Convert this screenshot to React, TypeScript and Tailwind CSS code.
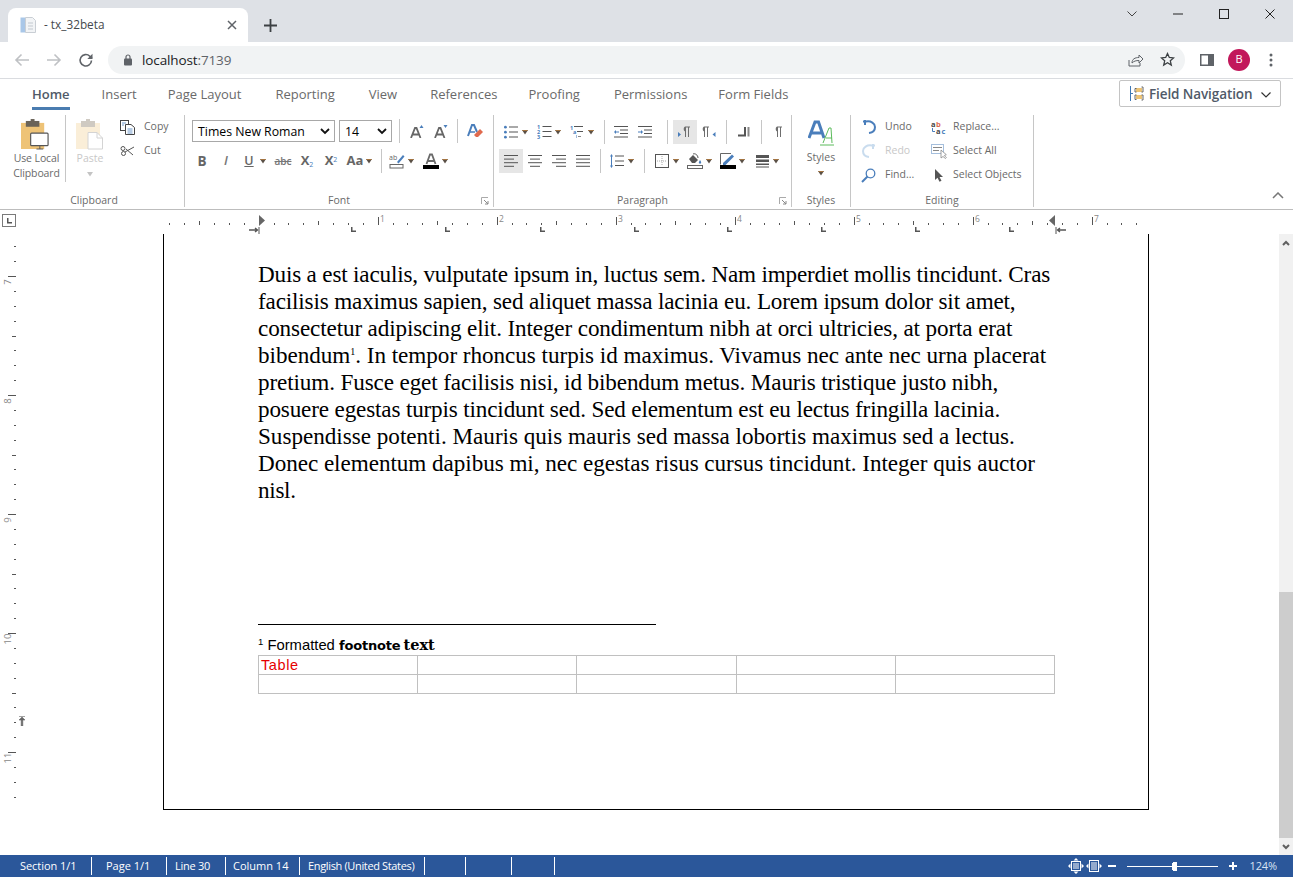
import React from "react";

const UI = "font-['Open_Sans',sans-serif]";

/* ---------- small drawings ---------- */
const Arrow = () => (
  <svg width="8" height="6" viewBox="0 0 8 6" className="shrink-0">
    <path d="M1 1h6L4 5.500z" fill="#5a5046" />
    <path d="M1 1h6l-.8 1H1.800z" fill="#a5743f" />
  </svg>
);

const Box = ({ children, active }: { children: React.ReactNode; active?: boolean }) => (
  <div className={`w-6 h-6 shrink-0 flex items-center justify-center ${active ? "bg-[#e6e6e6]" : ""}`}>{children}</div>
);

const Drop = ({ children }: { children: React.ReactNode }) => (
  <div className="flex items-center shrink-0 h-6">
    <Box>{children}</Box>
    <div className="w-2 -ml-[2px] flex justify-center">
      <Arrow />
    </div>
  </div>
);

const VSep = () => <div className="w-px h-6 bg-[#c6c6c6] shrink-0" />;

const Lines = ({ rows }: { rows: [number, number][] }) => (
  <svg width="16" height="14" viewBox="0 0 16 14">
    {rows.map(([x, w], i) => (
      <rect key={i} x={x} y={1 + i * 3.600} width={w} height="1" fill="#555" />
    ))}
  </svg>
);

const Launcher = () => (
  <svg width="8" height="8" viewBox="0 0 8 8" className="shrink-0">
    <path d="M.5 7V.5H7" fill="none" stroke="#aaa" />
    <path d="M3 3l4 4M7 4v3H4" fill="none" stroke="#888" />
  </svg>
);

const Bullets = () => (
  <svg width="14" height="14" viewBox="0 0 14 14">
    {[1, 6, 11].map((y) => (
      <g key={y}>
        <circle cx="1.400" cy={y + 1.200} r="1.400" fill="#4a7ebb" />
        <rect x="5" y={y + 0.500} width="9" height="1" fill="#555" />
      </g>
    ))}
  </svg>
);

const Numbered = () => (
  <svg width="15" height="14" viewBox="0 0 15 14">
    {[1, 6, 11].map((y, i) => (
      <g key={y}>
        <text x="0" y={y + 2.500} fontSize="5.500" fontWeight="700" fill="#4a7ebb" fontFamily="Open Sans">{i + 1}</text>
        <rect x="5.500" y={y} width="9" height="1" fill="#555" />
      </g>
    ))}
  </svg>
);

const Multi = () => (
  <svg width="14" height="14" viewBox="0 0 14 14">
    <text x="0" y="4.500" fontSize="5.500" fontWeight="700" fill="#4a7ebb" fontFamily="Open Sans">1</text>
    <rect x="4" y="1" width="9" height="1" fill="#555" />
    <text x="3" y="9" fontSize="5.500" fontWeight="700" fill="#4a7ebb" fontFamily="Open Sans">a</text>
    <rect x="7" y="6" width="6" height="1" fill="#555" />
    <rect x="6" y="10" width="1" height="3" fill="#a0b8d8" />
    <rect x="8" y="11" width="3" height="1" fill="#888" />
  </svg>
);

const Indent = ({ right }: { right?: boolean }) => (
  <svg width="14" height="12" viewBox="0 0 14 12">
    <rect x="0" y="0" width="14" height="1" fill="#555" />
    <rect x="6" y="3.500" width="8" height="1" fill="#555" />
    <rect x="6" y="7" width="8" height="1" fill="#555" />
    <rect x="0" y="10.500" width="14" height="1" fill="#555" />
    {right ? (
      <path d="M0 5.500h3V4l2 2-2 2V6.500H0z" fill="#4a7ebb" />
    ) : (
      <path d="M5 5.500H2V4L0 6l2 2V6.500h3z" fill="#4a7ebb" />
    )}
  </svg>
);

const Pilcrow = ({ arrow }: { arrow?: "l" | "r" }) => (
  <svg width="14" height="12" viewBox="0 0 14 12">
    {arrow === "l" && <path d="M0 6l3 2.500L0 11z" fill="#4a7ebb" />}
    <path
      d={arrow === "l" ? "M7 11V5.500a3 3 0 0 1 0-5h5v1h-1V11h-1V1.500H8V11z" : arrow === "r" ? "M2 11V5.500a3 3 0 0 1 0-5h5v1H6V11H5V1.500H3V11z" : "M5 11V5.500a3 3 0 0 1 0-5h5v1H9V11H8V1.500H6V11z"}
      fill="#6e6e6e"
    />
    {arrow === "r" && <path d="M13.500 6l-3 2.500 3 2.500z" fill="#4a7ebb" />}
  </svg>
);

/* ---------- ruler data ---------- */
const STEP = 14.875;
const ZERO = 259.7;
const hTicks: { x: number; h: number }[] = [];
for (let i = -6; i <= 59; i++) {
  const x = ZERO + i * STEP;
  if (i === 0 || x > 1140 || Math.abs(x - 1052) < 3) continue;
  if (i % 8 === 0) hTicks.push({ x, h: 9 });
  else if (i % 4 === 0) hTicks.push({ x, h: 5 });
  else hTicks.push({ x, h: 2 });
}
const hNums = [1, 2, 3, 4, 5, 6, 7];
const tabStops = [352, 446, 541, 635, 728, 822, 916, 1010];

const V0 = 276;
const vTicks: { y: number; w: number }[] = [];
for (let i = -2; i <= 42; i++) {
  const y = V0 + i * STEP;
  if (y > 800 || y < 240) continue;
  if (i % 8 === 0) vTicks.push({ y, w: 9 });
  else if (i % 4 === 0) vTicks.push({ y, w: 5 });
  else vTicks.push({ y, w: 2 });
}
const vNums = [7, 8, 9, 10, 11];

const body: [string | null, string][] = [
  ["Duis a est iaculis, vulputate ipsum in, luctus sem. Nam imperdiet mollis tincidunt. Cras", "tracking-[-0.18px]"],
  ["facilisis maximus sapien, sed aliquet massa lacinia eu. Lorem ipsum dolor sit amet,", "tracking-[-0.157px]"],
  ["consectetur adipiscing elit. Integer condimentum nibh at orci ultricies, at porta erat", "tracking-[-0.128px]"],
  [null, "tracking-[-0.034px]"],
  ["pretium. Fusce eget facilisis nisi, id bibendum metus. Mauris tristique justo nibh,", "tracking-[-0.12px]"],
  ["posuere egestas turpis tincidunt sed. Sed elementum est eu lectus fringilla lacinia.", "tracking-[-0.155px]"],
  ["Suspendisse potenti. Mauris quis mauris sed massa lobortis maximus sed a lectus.", "tracking-[-0.0125px]"],
  ["Donec elementum dapibus mi, nec egestas risus cursus tincidunt. Integer quis auctor", "tracking-[-0.048px]"],
  ["nisl.", "tracking-[-0.3px]"],
];

/* ---------- top-level pieces ---------- */
function TabStrip() {
  return (
    <div className="h-[42px] bg-[#dee1e6] flex items-end pl-2 relative">
      <div className="w-[240px] h-[34px] bg-white rounded-t-lg flex items-center pl-3 pr-[11px]">
        <svg width="16" height="16" viewBox="0 0 16 16" className="shrink-0">
          <rect x="0.500" y="0.500" width="5" height="15" fill="#a9c7e8" />
          <path d="M5.500 .5h7l3 3v12h-10z" fill="#f2f4f6" stroke="#c9ced4" />
          <path d="M8 6h5M8 9h5M8 12h5" stroke="#c2c8cf" />
        </svg>
        <span className={`ml-2 text-[11.800px] text-[#45494d] grow ${UI}`}>- tx_32beta</span>
        <svg width="10" height="10" viewBox="0 0 10 10">
          <path d="M1 1l8 8M9 1l-8 8" stroke="#5f6368" strokeWidth="1.500" />
        </svg>
      </div>
      <div className="w-[44px] h-[34px] flex items-center justify-center">
        <svg width="13" height="13" viewBox="0 0 13 13">
          <path d="M6.500 0v13M0 6.500h13" stroke="#3c4043" strokeWidth="1.800" />
        </svg>
      </div>
      <div className="ml-auto self-start flex h-[28px] items-center">
        <div className="w-[46px] flex justify-center">
          <svg width="10" height="6" viewBox="0 0 10 6"><path d="M.5.500L5 5 9.500.500" fill="none" stroke="#444" /></svg>
        </div>
        <div className="w-[46px] flex justify-center">
          <svg width="10" height="2" viewBox="0 0 10 2"><path d="M0 1h10" stroke="#222" /></svg>
        </div>
        <div className="w-[46px] flex justify-center">
          <svg width="10" height="10" viewBox="0 0 10 10"><rect x=".5" y=".5" width="9" height="9" fill="none" stroke="#222" /></svg>
        </div>
        <div className="w-[46px] flex justify-center">
          <svg width="10" height="10" viewBox="0 0 10 10"><path d="M.5.500l9 9M9.500.500l-9 9" stroke="#222" /></svg>
        </div>
      </div>
    </div>
  );
}

function AddressBar() {
  return (
    <div className="h-[37px] bg-white border-b border-[#dadce0] flex items-center pb-px">
      <div className="w-[108px] flex items-center pl-[14px] gap-[16px]">
        <svg width="16" height="14" viewBox="0 0 16 14"><path d="M15 7H2M7.500 1.500L2 7l5.500 5.500" fill="none" stroke="#bfc1c4" strokeWidth="1.600" /></svg>
        <svg width="16" height="14" viewBox="0 0 16 14"><path d="M1 7h13M8.500 1.500L14 7l-5.500 5.500" fill="none" stroke="#bfc1c4" strokeWidth="1.600" /></svg>
        <svg width="16" height="16" viewBox="0 0 16 16"><path d="M13.500 8.500a5.700 5.700 0 1 1-1.700-4.300L14 6.300" fill="none" stroke="#5f6368" strokeWidth="1.600" /><path d="M14.500 1.800v5.200H9.300z" fill="#5f6368" /></svg>
      </div>
      <div className="w-[1077px] h-[28px] bg-[#f1f3f4] rounded-full flex items-center pl-[14px] pr-[10px]">
        <svg width="10" height="12" viewBox="0 0 10 12" className="ml-px">
          <rect x="1" y="4.500" width="8" height="7" rx="1" fill="#5f6368" />
          <path d="M3 5V3a2 2 0 0 1 4 0v2" fill="none" stroke="#5f6368" strokeWidth="1.200" />
        </svg>
        <span className={`ml-[9px] pt-px text-[13.500px] tracking-[-0.12px] grow ${UI}`}>
          <span className="text-[#202124]">localhost</span>
          <span className="text-[#5f6368]">:7139</span>
        </span>
        <svg width="16" height="14" viewBox="0 0 16 14" className="mr-[16px]">
          <path d="M1 7v6h11v-3" fill="none" stroke="#5f6368" />
          <path d="M4 10c0-4 3-5.500 7-5.500V2l4 4-4 4V7.500C8 7.500 6 8 4 10z" fill="none" stroke="#5f6368" />
        </svg>
        <svg width="15" height="15" viewBox="0 0 15 15">
          <path d="M7.500 1.500l1.800 4 4.300.4-3.300 2.900 1 4.300-3.800-2.300-3.800 2.300 1-4.300L1.400 5.900l4.300-.4z" fill="none" stroke="#3c4043" strokeWidth="1.300" />
        </svg>
      </div>
      <div className="flex items-center pl-[15px]">
        <svg width="14" height="12" viewBox="0 0 14 12">
          <rect x="0.750" y="0.750" width="12.500" height="10.500" fill="none" stroke="#5f6368" strokeWidth="1.500" />
          <rect x="8" y="1" width="5" height="10" fill="#5f6368" />
        </svg>
        <div className={`ml-[14px] w-[22px] h-[22px] rounded-full bg-[#c2185b] text-white text-[11px] flex items-center justify-center ${UI}`}>B</div>
        <svg width="4" height="14" viewBox="0 0 4 14" className="ml-[19px]">
          <circle cx="2" cy="2" r="1.500" fill="#5f6368" />
          <circle cx="2" cy="7" r="1.500" fill="#5f6368" />
          <circle cx="2" cy="12" r="1.500" fill="#5f6368" />
        </svg>
      </div>
    </div>
  );
}

function RibbonTabs() {
  const tabs: [string, string][] = [
    ["Insert", "ml-[32px]"],
    ["Page Layout", "ml-[31px]"],
    ["Reporting", "ml-[34px]"],
    ["View", "ml-[34px]"],
    ["References", "ml-[33px]"],
    ["Proofing", "ml-[31px]"],
    ["Permissions", "ml-[34px]"],
    ["Form Fields", "ml-[31px]"],
  ];
  return (
    <div className={`h-[31px] flex items-start pl-8 pr-3 ${UI}`}>
      <div className="h-[31px] border-b-[3px] border-[#4a7cb0] text-[13px] font-semibold text-[#505a68] pt-[6px] leading-[18px]">Home</div>
      {tabs.map(([t, m]) => (
        <div key={t} className={`${m} text-[13px] text-[#6a6a6a] pt-[6px] leading-[18px]`}>{t}</div>
      ))}
      <div className="ml-auto mt-px w-[162px] h-[27px] border border-[#c4c4c4] rounded-[2px] flex items-center pl-[9px]">
        <svg width="15" height="15" viewBox="0 0 15 15" className="shrink-0">
          <path d="M1.500 0v15M1.500 7.500H4" fill="none" stroke="#3f78b5" />
          <rect x="7" y="2" width="6" height="4" fill="#ecc375" />
          <rect x="7" y="9" width="6" height="4" fill="#ecc375" />
          <path d="M7.500 2.500H6v3.500h1.500M7.500 9H6v4.500h1.500M12.500 1H14v5h-1.500M12.500 9H14v5h-1.500" fill="none" stroke="#666" />
        </svg>
        <span className="ml-[5px] pt-[2px] text-[13.500px] font-semibold text-[#505a68] tracking-[-0.1px]">Field Navigation</span>
        <svg width="10" height="6" viewBox="0 0 10 6" className="ml-[9px] mt-[2px]"><path d="M.5.500L5 5 9.500.500" fill="none" stroke="#333" strokeWidth="1.200" /></svg>
      </div>
    </div>
  );
}

const GroupLabel = ({ text, launcher, shift }: { text: string; launcher?: boolean; shift?: boolean }) => (
  <div className={`h-[16px] mt-auto relative text-center text-[10.500px] leading-[16px] text-[#6a6a6a] -mb-px ${shift ? "pl-[4px]" : ""}`}>
    {text}
    {launcher && (
      <span className="absolute right-[4px] top-[5px] flex">
        <Launcher />
      </span>
    )}
  </div>
);

function ClipboardGroup() {
  return (
    <div className="w-[185px] shrink-0 h-[92px] border-r border-[#c6c6c6] flex flex-col">
      <div className="flex h-[68px]">
        <div className="w-[66px] h-[67px] border-r border-[#c6c6c6] flex flex-col items-center pl-[8px]">
          <svg width="29" height="31" viewBox="0 0 30 32" className="mt-[4px] -ml-[2px] shrink-0">
            <rect x="0" y="4" width="24" height="27" fill="#eec377" />
            <rect x="5" y="2" width="14" height="6" fill="#6a6358" />
            <rect x="10" y="0" width="4" height="3" fill="#6a6358" />
            <rect x="10" y="14.500" width="18" height="13" fill="#fff" stroke="#555" strokeWidth="1.200" rx="1" />
            <path d="M16 31h7M19.500 28v3" stroke="#555" />
          </svg>
          <div className="text-[10.500px] leading-[15px] tracking-[-0.1px] text-[#6a6a6a] text-center whitespace-nowrap mt-[1px] -ml-[0px]">Use Local<br />Clipboard</div>
        </div>
        <div className="w-[48px] flex flex-col items-center">
          <svg width="28" height="31" viewBox="0 0 28 31" className="mt-[4px] shrink-0">
            <rect x="0" y="4" width="24" height="26" fill="#faeed8" />
            <rect x="5" y="2" width="14" height="6" fill="#cfcac2" />
            <rect x="10" y="0" width="4" height="3" fill="#cfcac2" />
            <path d="M12 13.500h9l5.500 5.500v11H12z" fill="#fff" stroke="#d4d4d4" />
            <path d="M21 13.500V19h5.500" fill="none" stroke="#d4d4d4" />
          </svg>
          <div className="text-[10.500px] leading-[15px] text-[#c8c8c8] mt-[1px]">Paste</div>
          <svg width="8" height="6" viewBox="0 0 8 6" className="mt-[5px]"><path d="M1 1h6L4 5.500z" fill="#c4c4c4" /></svg>
        </div>
        <div className="flex flex-col pl-[2px]">
          <div className="h-6 flex items-center">
            <svg width="15" height="15" viewBox="0 0 15 15" className="ml-[4px]">
              <rect x=".5" y=".5" width="8" height="10" fill="#fff" stroke="#444" />
              <path d="M5.500 4.500H11l3.500 3v7h-9z" fill="#fff" stroke="#444" />
              <path d="M2 3h4M2 5h2M7.500 9h5M7.500 11h5M7.500 13h5" stroke="#4a7ebb" strokeWidth=".8" />
            </svg>
            <span className="ml-[9px] text-[10.500px] text-[#6a6a6a]">Copy</span>
          </div>
          <div className="h-6 flex items-center">
            <svg width="15" height="14" viewBox="0 0 15 14" className="ml-[4px]">
              <path d="M14 3L5 8M13 11L6 5" stroke="#555" strokeWidth="1" fill="none" />
              <circle cx="3" cy="4.500" r="2" fill="none" stroke="#555" />
              <circle cx="3.500" cy="9.500" r="2" fill="none" stroke="#555" />
            </svg>
            <span className="ml-[9px] text-[10.500px] text-[#6a6a6a]">Cut</span>
          </div>
        </div>
      </div>
      <GroupLabel text="Clipboard" shift />
    </div>
  );
}

const GrowA = ({ up }: { up?: boolean }) => (
  <svg width="14" height="13" viewBox="0 0 14 13">
    <path d="M1 13L5 3h1.500L10.500 13M3 9.500h5.500" fill="none" stroke="#666" strokeWidth="1.800" />
    {up ? <path d="M9.500 3l2-3 2 3z" fill="#4a7ebb" /> : <path d="M9.500 0l2 3 2-3z" fill="#4a7ebb" />}
  </svg>
);

function FontGroup() {
  return (
    <div className="w-[309px] shrink-0 h-[92px] border-r border-[#c6c6c6] flex flex-col">
      <div className="flex items-center h-[22px] mt-[5px] pl-[7px]">
        <div className="w-[143px] relative flex items-center h-[22px] border border-[#a8a8a8] pl-[5px] pt-[2px] text-[12.300px] text-black whitespace-nowrap">
          Times New Roman
          <svg width="10" height="7" viewBox="0 0 10 7" className="absolute right-[4px] top-[7px]"><path d="M1 1l4 4 4-4" fill="none" stroke="#111" strokeWidth="1.800" /></svg>
        </div>
        <div className="ml-[4px] w-[53px] relative flex items-center h-[22px] border border-[#a8a8a8] pl-[5px] pt-[2px] text-[12.300px] text-black">
          14
          <svg width="10" height="7" viewBox="0 0 10 7" className="absolute right-[4px] top-[7px]"><path d="M1 1l4 4 4-4" fill="none" stroke="#111" strokeWidth="1.800" /></svg>
        </div>
        <div className="ml-[7px]"><VSep /></div>
        <div className="ml-[5px]"><Box><GrowA up /></Box></div>
        <Box><GrowA /></Box>
        <div className="ml-[4px]"><VSep /></div>
        <div className="ml-[5px]">
          <Box>
            <svg width="16" height="14" viewBox="0 0 16 14">
              <path d="M1 12L5 1h2l3 7" fill="none" stroke="#4a7ebb" strokeWidth="2" />
              <path d="M2.500 8H8" stroke="#4a7ebb" strokeWidth="1.500" />
              <path d="M7 11l6-6 3 3-5 5H9z" fill="#e06a4e" />
            </svg>
          </Box>
        </div>
      </div>
      <div className="flex items-center h-6 mt-[7px] pl-[5px]">
        <Box><span className="font-bold text-[13.500px] text-[#666]">B</span></Box>
        <Box><span className="italic font-semibold text-[13px] text-[#777]">I</span></Box>
        <div className="-ml-px">
          <Drop><span className="font-semibold text-[12.500px] underline text-[#666] leading-none">U</span></Drop>
        </div>
        <div className="ml-1">
          <Box><span className="line-through text-[10px] font-semibold text-[#777]">abc</span></Box>
        </div>
        <Box>
          <span className="font-bold text-[13px] text-[#666]">X<sub className="text-[7px] text-[#4a7ebb] font-normal">2</sub></span>
        </Box>
        <Box>
          <span className="font-bold text-[13px] text-[#666]">X<sup className="text-[7px] text-[#4a7ebb] font-normal">2</sup></span>
        </Box>
        <Drop><span className="font-bold text-[13px] text-[#666] whitespace-nowrap">Aa</span></Drop>
        <div className="ml-2"><VSep /></div>
        <div className="ml-[3px]">
          <Drop>
            <svg width="16" height="16" viewBox="0 0 16 16">
              <text x="0" y="7" fontSize="7" fill="#666" fontFamily="Open Sans">ab</text>
              <path d="M8 9l6-7 1.500 1.500-6 7z" fill="#4a7ebb" />
              <rect x="1" y="11.500" width="13" height="3.500" fill="#fff" stroke="#666" />
            </svg>
          </Drop>
        </div>
        <div className="ml-1">
          <Drop>
            <svg width="16" height="16" viewBox="0 0 16 16">
              <path d="M3.500 11L7 1.500h2L12.500 11M5 8h6" fill="none" stroke="#6a6a6a" strokeWidth="1.800" />
              <rect x="0" y="12" width="16" height="4" fill="#000" />
            </svg>
          </Drop>
        </div>
      </div>
      <GroupLabel text="Font" launcher />
    </div>
  );
}

function ParagraphGroup() {
  return (
    <div className="w-[298px] shrink-0 h-[92px] border-r border-[#c6c6c6] flex flex-col">
      <div className="flex items-center h-6 mt-[5px] pl-[5px]">
        <Drop><Bullets /></Drop>
        <div className="ml-[3px]"><Drop><Numbered /></Drop></div>
        <div className="ml-[3px]"><Drop><Multi /></Drop></div>
        <div className="ml-[9px]"><VSep /></div>
        <div className="ml-[4px] flex">
          <Box><Indent /></Box>
          <Box><Indent right /></Box>
        </div>
        <div className="ml-[10px]"><VSep /></div>
        <div className="ml-[5px] flex">
          <Box active><Pilcrow arrow="l" /></Box>
          <Box><Pilcrow arrow="r" /></Box>
        </div>
        <div className="ml-[5px]"><VSep /></div>
        <div className="ml-[5px]">
          <Box>
            <svg width="12" height="10" viewBox="0 0 12 10">
              <path d="M0 7.500h6V0h2v9.500H0z" fill="#555" />
              <rect x="9.500" y="0" width="2" height="9.500" fill="#888" />
            </svg>
          </Box>
        </div>
        <div className="ml-[5px]"><VSep /></div>
        <div className="ml-[5px]"><Box><Pilcrow /></Box></div>
      </div>
      <div className="flex items-center h-6 mt-[5px] pl-[5px]">
        <Box active><Lines rows={[[1, 14], [1, 10], [1, 14], [1, 10]]} /></Box>
        <Box><Lines rows={[[1, 14], [3, 10], [1, 14], [3, 10]]} /></Box>
        <Box><Lines rows={[[1, 14], [5, 10], [1, 14], [5, 10]]} /></Box>
        <Box><Lines rows={[[1, 14], [1, 14], [1, 14], [1, 14]]} /></Box>
        <div className="ml-[5px]"><VSep /></div>
        <div className="ml-[4px]">
          <Drop>
            <svg width="14" height="14" viewBox="0 0 14 14">
              <path d="M1.500 0L0 2.500h3zM1.500 14L0 11.500h3z" fill="#4a7ebb" />
              <rect x="1" y="2" width="1" height="10" fill="#4a7ebb" />
              <path d="M5 2h9M5 7h9M5 11.500h9" stroke="#555" />
            </svg>
          </Drop>
        </div>
        <div className="ml-[9px]"><VSep /></div>
        <div className="ml-[5px]">
          <Drop>
            <svg width="14" height="14" viewBox="0 0 14 14">
              <rect x=".5" y=".5" width="13" height="13" fill="none" stroke="#555" />
              <path d="M7 2v10M2 7h10" stroke="#aaa" strokeDasharray="1 1" />
            </svg>
          </Drop>
        </div>
        <div className="ml-[3px]">
          <Drop>
            <svg width="16" height="16" viewBox="0 0 16 16">
              <path d="M2 6l4-4 5 5-3 3H5z" fill="#555" />
              <path d="M6 1c2-1 5 1 5 4" fill="none" stroke="#555" />
              <path d="M13 7c1 1.500 1.500 2.500 1 3.500h-2c-.5-1 .2-2 1-3.500z" fill="#4a7ebb" />
              <rect x=".5" y="12.500" width="15" height="3" fill="#fff" stroke="#666" />
            </svg>
          </Drop>
        </div>
        <div className="ml-[3px]">
          <Drop>
            <svg width="16" height="16" viewBox="0 0 16 16">
              <path d="M11 .5H.5v11" fill="none" stroke="#666" />
              <path d="M3 10L12 1.500l2 2L5.500 12H3z" fill="#4a7ebb" />
              <rect x="0" y="12" width="16" height="4" fill="#000" />
            </svg>
          </Drop>
        </div>
        <div className="ml-[4px]">
          <Drop>
            <svg width="13" height="13" viewBox="0 0 13 13">
              <rect x="0" y="0" width="13" height="3" fill="#555" />
              <rect x="0" y="4.500" width="13" height="2.500" fill="#555" />
              <rect x="0" y="8.500" width="13" height="1.500" fill="#555" />
              <rect x="0" y="11.500" width="13" height="1" fill="#555" />
            </svg>
          </Drop>
        </div>
      </div>
      <GroupLabel text="Paragraph" launcher />
    </div>
  );
}

function StylesGroup() {
  return (
    <div className="w-[59px] shrink-0 h-[92px] border-r border-[#c6c6c6] flex flex-col items-stretch">
      <div className="flex flex-col items-center pt-[5px]">
        <svg width="26" height="26" viewBox="0 0 26 26">
          <path d="M1 18L7 2h3.500L16 18M4 13h9" fill="none" stroke="#4a7ebb" strokeWidth="3" />
          <path d="M15 23L21 8h2l1 15M18 18h6" fill="none" stroke="#5cbb5c" strokeWidth="1" />
          <path d="M12 25h14" stroke="#5cbb5c" />
        </svg>
        <div className="text-[10.500px] leading-[15px] text-[#6a6a6a] mt-[4px]">Styles</div>
        <div className="mt-[5px] flex"><Arrow /></div>
      </div>
      <GroupLabel text="Styles" />
    </div>
  );
}

const EditRow = ({ icon, text, faint, w }: { icon: React.ReactNode; text: string; faint?: boolean; w: string }) => (
  <div className="h-6 flex items-center">
    <div className={`${w} flex items-center justify-center shrink-0`}>{icon}</div>
    <span className={`text-[10.500px] whitespace-nowrap ${faint ? "text-[#c8c8c8]" : "text-[#6a6a6a]"}`}>{text}</span>
  </div>
);

function EditingGroup() {
  return (
    <div className="w-[183px] shrink-0 h-[92px] border-r border-[#c6c6c6] flex flex-col">
      <div className="flex pl-[5px]">
        <div className="w-[70px] flex flex-col">
          <EditRow w="w-[27px] pr-[2px] mr-[2px]" text="Undo" icon={
            <svg width="14" height="14" viewBox="0 0 14 14"><path d="M1 1.500h3.500M4 1.500c5-1 9 2 9 5.500 0 3-2 5.500-6 6" fill="none" stroke="#4a7ebb" strokeWidth="2" /><path d="M3 0v5" stroke="#4a7ebb" strokeWidth="2" /></svg>
          } />
          <EditRow w="w-[27px] pr-[2px] mr-[2px]" text="Redo" faint icon={
            <svg width="14" height="14" viewBox="0 0 14 14"><path d="M13 1.500H9.500M10 1.500C5 .5 1 3.500 1 7c0 3 2 5.500 6 6" fill="none" stroke="#c9dcee" strokeWidth="2" /><path d="M11 0v5" stroke="#c9dcee" strokeWidth="2" /></svg>
          } />
          <EditRow w="w-[27px] pr-[2px] mr-[2px]" text="Find..." icon={
            <svg width="15" height="15" viewBox="0 0 15 15"><circle cx="9.500" cy="5.500" r="4.300" fill="none" stroke="#4a7ebb" strokeWidth="1.300" /><path d="M6.500 8.500L1 14" stroke="#4a7ebb" strokeWidth="2" /></svg>
          } />
        </div>
        <div className="flex flex-col">
          <EditRow w="w-[27px] pr-[1px]" text="Replace..." icon={
            <svg width="17" height="15" viewBox="0 0 17 15">
              <text x="0" y="6.500" fontSize="7.500" fontWeight="700" fill="#444" fontFamily="Open Sans">a</text>
              <text x="5" y="6.500" fontSize="7.500" fontWeight="700" fill="#e06a4e" fontFamily="Open Sans">b</text>
              <text x="5" y="14" fontSize="7.500" fontWeight="700" fill="#444" fontFamily="Open Sans">a</text>
              <text x="10.500" y="14" fontSize="7.500" fontWeight="700" fill="#4a7ebb" fontFamily="Open Sans">c</text>
              <path d="M1.500 8v3.500H4" fill="none" stroke="#4a7ebb" />
            </svg>
          } />
          <EditRow w="w-[27px] pr-[1px]" text="Select All" icon={
            <svg width="16" height="15" viewBox="0 0 16 15">
              <rect x=".5" y=".5" width="12" height="9" fill="none" stroke="#4a7ebb" strokeDasharray="1 1" />
              <path d="M2 3.500h9M2 6.500h6" stroke="#888" />
              <path d="M10 6v8l2-1.500 2.500 2 .8-1-2-2 2-.8z" fill="#fff" stroke="#888" strokeWidth=".8" />
            </svg>
          } />
          <EditRow w="w-[27px] pr-[1px]" text="Select Objects" icon={
            <svg width="10" height="13" viewBox="0 0 10 13"><path d="M1 0v11l2.500-2.300 2 4 2-1-2-3.700H9z" fill="#555" /></svg>
          } />
        </div>
      </div>
      <GroupLabel text="Editing" />
    </div>
  );
}

function Ribbon() {
  return (
    <div className={`h-[100px] border-b border-[#bdbdbd] flex pt-[5px] relative ${UI}`}>
      <ClipboardGroup />
      <FontGroup />
      <ParagraphGroup />
      <StylesGroup />
      <EditingGroup />
      <svg width="12" height="7" viewBox="0 0 12 7" className="absolute right-[9px] top-[82px]">
        <path d="M1 6l5-5 5 5" fill="none" stroke="#777" strokeWidth="1.500" />
      </svg>
    </div>
  );
}

function HRuler() {
  return (
    <div className={`h-[24px] relative bg-white shrink-0 ${UI}`}>
      <div className="absolute left-[2px] top-[4px] w-[14px] h-[13px] border border-[#7a7a7a] flex items-center justify-center">
        <svg width="6" height="6" viewBox="0 0 6 6"><path d="M1 0h1.500v4H6v1.500H1z" fill="#555" /></svg>
      </div>
      {hTicks.map((t) => (
        <div
          key={t.x}
          className="absolute w-px bg-[#555]"
          style={{ left: Math.round(t.x) - 1, top: t.h === 9 ? 7 : t.h === 5 ? 11 : 13, height: t.h === 9 ? 8 : t.h === 5 ? 4 : 2 }}
        />
      ))}
      {hNums.map((n) => (
        <span
          key={n}
          className="absolute text-[8.500px] leading-[10px] text-[#888]"
          style={{ left: Math.round(ZERO + n * 119) + 1, top: 4 }}
        >
          {n}
        </span>
      ))}
      {tabStops.map((x) => (
        <svg key={x} width="5" height="5" viewBox="0 0 5 5" className="absolute top-[17px]" style={{ left: x - 1 }}>
          <path d="M0 0h1.500v3.500H5V5H0z" fill="#555" />
        </svg>
      ))}
      {/* first-line and right-indent markers */}
      <svg width="6" height="11" viewBox="0 0 6 11" className="absolute left-[259px] top-[5px]"><path d="M0 0l6 5.500L0 11z" fill="#666" /></svg>
      <svg width="6" height="11" viewBox="0 0 6 11" className="absolute left-[1049px] top-[5px]"><path d="M6 0L0 5.500 6 11z" fill="#666" /></svg>
      <svg width="11" height="7" viewBox="0 0 11 7" className="absolute left-[249px] top-[17px]"><path d="M0 3h8M6 1l2.500 2L6 5" fill="none" stroke="#555" strokeWidth="1.400" /><path d="M10 0v7" stroke="#555" /></svg>
      <svg width="11" height="7" viewBox="0 0 11 7" className="absolute left-[1055px] top-[17px]"><path d="M11 3H3M5 1L2.500 3 5 5" fill="none" stroke="#555" strokeWidth="1.400" /><path d="M1 0v7" stroke="#555" /></svg>
    </div>
  );
}

function VRuler() {
  return (
    <>
      {vTicks.map((t) => (
        <div
          key={t.y}
          className="absolute h-px bg-[#555]"
          style={{ top: Math.round(t.y) - 234, left: t.w === 9 ? 8 : t.w === 5 ? 12 : 14, width: t.w === 9 ? 8 : t.w === 5 ? 4 : 2 }}
        />
      ))}
      {vNums.map((n) => (
        <span
          key={n}
          className={`absolute text-[9.500px] leading-[10px] text-[#888] -rotate-90 origin-center w-[14px] text-center ${UI}`}
          style={{ top: Math.round(V0 + (n - 7) * 119) - 234 + 1, left: 1 }}
        >
          {n}
        </span>
      ))}
      <svg width="6" height="10" viewBox="0 0 6 10" className="absolute left-[19px] top-[482px]">
        <path d="M0 .5h6M0 4l3-3 3 3zM2.200 3h1.600v7H2.200z" fill="#666" stroke="#666" strokeWidth=".6" />
      </svg>
    </>
  );
}

function Page() {
  const cols = ["w-[159px]", "w-[159px]", "w-[160px]", "w-[159px]", "w-[159px]"];
  return (
    <div className="absolute left-[163px] top-0 w-[986px] h-[576px] border-x border-b border-black bg-white pl-[94px]">
      <div className="pt-[27px] font-['Liberation_Serif',serif] text-[23.150px] leading-[27px] text-black whitespace-nowrap h-[390px]">
        {body.map(([line, track], i) =>
          line === null ? (
            <div key={i} className={track}>
              bibendum<sup className="text-[10px] align-baseline relative -top-[8px]">1</sup>. In tempor rhoncus turpis id maximus. Vivamus nec ante nec urna placerat
            </div>
          ) : (
            <div key={i} className={track}>{line}</div>
          )
        )}
      </div>
      <div className="w-[398px] h-px bg-black" />
      <div className="font-['Liberation_Sans',sans-serif] text-[14.800px] leading-[19px] text-black mt-[10px] whitespace-nowrap h-[20px]">
        <sup className="text-[9.500px] font-normal align-baseline relative -top-[5px]">1</sup> Formatted{" "}
        <span className="font-['DejaVu_Sans',sans-serif] font-bold text-[13px] tracking-[-0.2px]">footnote</span>{" "}
        <span className="font-['DejaVu_Serif',serif] font-bold text-[14.500px] -ml-[1px]">text</span>
      </div>
      <table className="border-collapse table-fixed w-[796px] font-['Liberation_Sans',sans-serif]">
        <tbody>
          {[0, 1].map((r) => (
            <tr key={r} className="h-[19px]">
              {cols.map((w, c) => (
                <td key={c} className={`${w} border border-[#c0c0c0] p-0 pl-[2px] text-[14.500px] tracking-[0.6px] leading-[17px] text-[#e60000]`}>
                  {r === 0 && c === 0 ? "Table" : ""}
                </td>
              ))}
            </tr>
          ))}
        </tbody>
      </table>
    </div>
  );
}

function Scrollbar() {
  return (
    <div className="absolute right-0 top-0 bottom-0 w-[14px] bg-[#f1f1f1] flex flex-col">
      <div className="h-[17px] flex items-center justify-center">
        <svg width="8" height="6" viewBox="0 0 8 6"><path d="M1 5l3-3 3 3" fill="none" stroke="#606060" strokeWidth="2" /></svg>
      </div>
      <div className="grow pt-[341px]">
        <div className="h-full bg-[#cdcdcd]" />
      </div>
      <div className="h-[17px] flex items-center justify-center">
        <svg width="8" height="6" viewBox="0 0 8 6"><path d="M1 1l3 3 3-3" fill="none" stroke="#606060" strokeWidth="2" /></svg>
      </div>
    </div>
  );
}

function StatusBar() {
  const items: [string, string][] = [
    ["Section 1/1", "w-[92px] pl-[20px] tracking-[-0.05px]"],
    ["Page 1/1", "w-[75px] pl-[14px]"],
    ["Line 30", "w-[59px] pl-[8px] tracking-[-0.25px]"],
    ["Column 14", "w-[74px] pl-[7px]"],
    ["English (United States)", "w-[125px] pl-[8px] tracking-[-0.35px]"],
  ];
  return (
    <div className={`h-[22px] bg-[#2b579a] flex items-center text-white text-[11px] ${UI}`}>
      {items.map(([t, c]) => (
        <div key={t} className={`${c} h-[18px] border-r border-white leading-[18px] whitespace-nowrap`}>{t}</div>
      ))}
      <div className="w-[41px] h-[18px] border-r border-white" />
      <div className="w-[46px] h-[18px] border-r border-white" />
      <div className="w-[43px] h-[18px] border-r border-white" />
      <div className="ml-auto flex items-center pr-[16px]">
        <svg width="16" height="16" viewBox="0 0 16 16">
          <path d="M8 0l2.500 2.500h-5zM8 16l-2.500-2.500h5zM0 8l2.500-2.500v5zM16 8l-2.500 2.500v-5z" fill="#fff" />
          <rect x="3.500" y="3.500" width="9" height="9" fill="none" stroke="#fff" />
          <path d="M5 6h6M5 8h6M5 10h6" stroke="#fff" />
        </svg>
        <svg width="16" height="12" viewBox="0 0 16 12" className="ml-[2px]">
          <path d="M0 6l2.500-2.500v5zM16 6l-2.500 2.500v-5z" fill="#fff" />
          <rect x="3.500" y=".5" width="9" height="11" fill="none" stroke="#fff" />
          <path d="M5 3h6M5 5h6M5 7h6M5 9h6" stroke="#fff" />
        </svg>
        <div className="ml-[6px] w-[8px] h-[2px] bg-white" />
        <div className="ml-[11px] w-[91px] h-px bg-white relative">
          <div className="absolute left-[45px] -top-[3px] w-px h-[7px] bg-white" />
          <div className="absolute left-[46px] -top-[4px] w-[4px] h-[9px] bg-white" />
        </div>
        <svg width="8" height="8" viewBox="0 0 8 8" className="ml-[11px]"><path d="M4 0v8M0 4h8" stroke="#fff" strokeWidth="2" /></svg>
        <span className="ml-[12px] text-[11px] text-[#d8e4f4] tracking-[-0.1px]">124%</span>
      </div>
    </div>
  );
}

export default function App() {
  return (
    <div className="w-[1293px] h-[877px] overflow-hidden bg-white flex flex-col">
      <TabStrip />
      <AddressBar />
      <RibbonTabs />
      <Ribbon />
      <HRuler />
      <div className="h-[621px] relative overflow-hidden">
        <VRuler />
        <Page />
        <Scrollbar />
      </div>
      <StatusBar />
    </div>
  );
}
